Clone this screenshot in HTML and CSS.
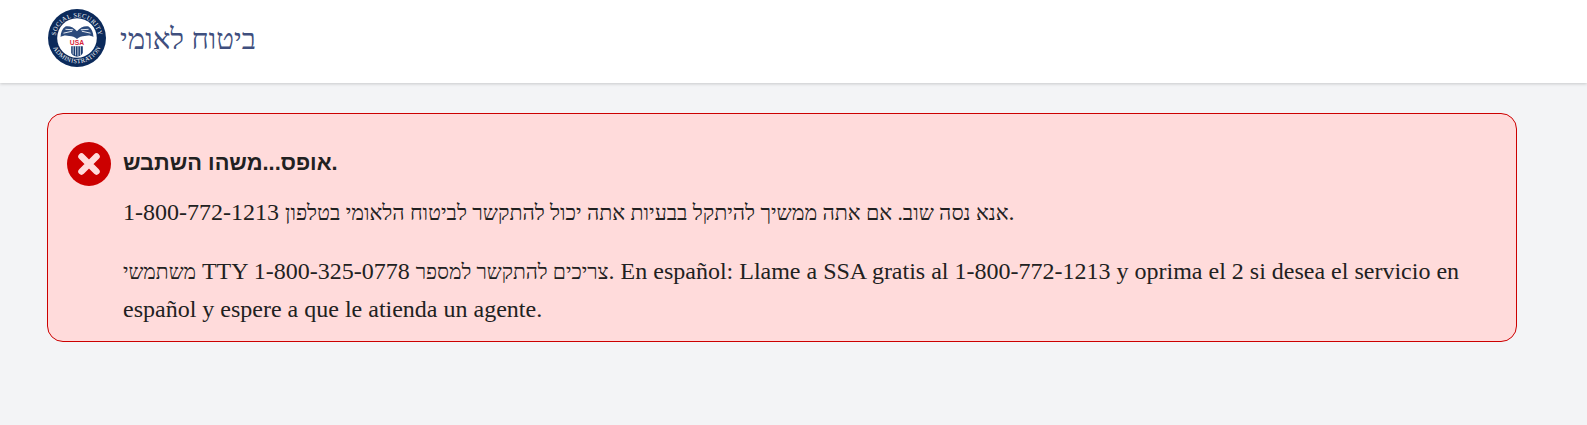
FILE: index.html
```html
<!DOCTYPE html>
<html lang="he">
<head>
    <meta charset="UTF-8">
    <meta name="viewport" content="width=device-width, initial-scale=1.0">
    <title>ביטוח לאומי</title>
    <link rel="stylesheet" href="styles.css">
</head>
<body>
    <header class="site-header">
        <svg class="logo" viewBox="0 0 60 60" aria-hidden="true">
            <defs>
                <path id="logoTop" d="M7.500 31 A22.500 22.500 0 0 1 52.500 31"/>
                <path id="logoBottom" d="M3 29 A27 27 0 0 0 57 29"/>
            </defs>
            <circle cx="30" cy="30" r="30" fill="#0b2a5b"/>
            <circle cx="30" cy="30" r="20.500" fill="#fff"/>
            <text class="logo-ring"><textPath href="#logoTop" startOffset="50%" text-anchor="middle">SOCIAL SECURITY</textPath></text>
            <text class="logo-ring"><textPath href="#logoBottom" startOffset="50%" text-anchor="middle">ADMINISTRATION</textPath></text>
            <!-- eagle wings -->
            <path d="M30 23 C27 19 22 17 18 18 C15 20 13 24 13 29 C16 27 19 27 22 28 C25 28 28 29 30 31 C32 29 35 28 38 28 C41 27 44 27 47 29 C47 24 45 20 42 18 C38 17 33 19 30 23Z" fill="#2b4a7c"/>
            <path d="M16 25 L25 23 M18 21 L26 21.500 M44 25 L35 23 M42 21 L34 21.500" stroke="#fff" stroke-width=".9"/>
            <text class="logo-usa" x="30" y="37.500" text-anchor="middle">USA</text>
            <!-- shield stripes -->
            <path d="M24 38.500 H36 V45 Q36 48 30 49.500 Q24 48 24 45Z" fill="#173a70"/>
            <path d="M26 38.500 V47 M28.500 38.500 V48 M31 38.500 V49 M33.500 38.500 V48" stroke="#fff" stroke-width=".8"/>
        </svg>
        <span class="brand">ביטוח לאומי</span>
    </header>
    <main class="content">
        <div class="alert">
            <svg class="alert-icon" viewBox="0 0 44 44" aria-hidden="true">
                <circle cx="22" cy="22" r="22" fill="#cc0000"/>
                <path d="M14.500 14.500 L29.500 29.500 M29.500 14.500 L14.500 29.500" stroke="#ffdbdb" stroke-width="6.500" stroke-linecap="round"/>
            </svg>
            <div class="alert-body">
                <h2>אופס...משהו השתבש.</h2>
                <p class="first">
                    <span class="he">אנא נסה שוב. אם אתה ממשיך להיתקל בבעיות אתה יכול להתקשר לביטוח הלאומי בטלפון</span> 1-800-772-1213.
                </p>
                <p>
                    <span class="he he-short">משתמשי</span> TTY <span class="he he-short">צריכים להתקשר למספר</span> 1-800-325-0778. En español: Llame a SSA gratis al 1-800-772-1213 y oprima el 2 si desea el servicio en español y espere a que le atienda un agente.
                </p>
            </div>
        </div>
    </main>
</body>
</html>
```

FILE: styles.css
```css
body {
    margin: 0;
    min-height: 425px;
    background-color: #f3f4f6;
    color: #212121;
    font-family: "Liberation Serif", serif;
    overflow: hidden;
}
.site-header {
    display: flex;
    align-items: center;
    gap: 14px;
    height: 83px;
    box-sizing: border-box;
    padding: 0 0 8px 48px;
    background-color: #fff;
    box-shadow: 0 1px 3px rgba(0, 0, 0, 0.18);
}
.logo {
    width: 58px;
    height: 58px;
}
.logo-ring {
    font-family: "Liberation Serif", serif;
    font-size: 6.6px;
    letter-spacing: 0.4px;
    fill: #fff;
}
.logo-usa {
    font-family: "Liberation Sans", sans-serif;
    font-size: 7px;
    font-weight: bold;
    fill: #d8243c;
}
.brand {
    padding-top: 4px;
    font-size: 29.4px;
    color: #3f4f7e;
}
.content {
    padding: 30px 70px 0 47px;
}
.alert {
    display: flex;
    gap: 12px;
    box-sizing: border-box;
    height: 229px;
    padding: 28px 19px 0 19px;
    background-color: #ffdbdb;
    border: 1px solid #cc0000;
    border-radius: 16px;
}
.alert-icon {
    flex: none;
    width: 44px;
    height: 44px;
}
.alert-body h2 {
    margin: 8px 0 17px;
    font-family: "Liberation Sans", sans-serif;
    font-size: 21.8px;
    line-height: 26px;
}
.alert-body p {
    margin: 0 0 20px;
    font-size: 24px;
    line-height: 38px;
}
.alert-body .first {
    margin-bottom: 21px;
}
.he {
    font-size: 21.4px;
    line-height: 1;
}
.he-short {
    font-size: 21px;
}
```
